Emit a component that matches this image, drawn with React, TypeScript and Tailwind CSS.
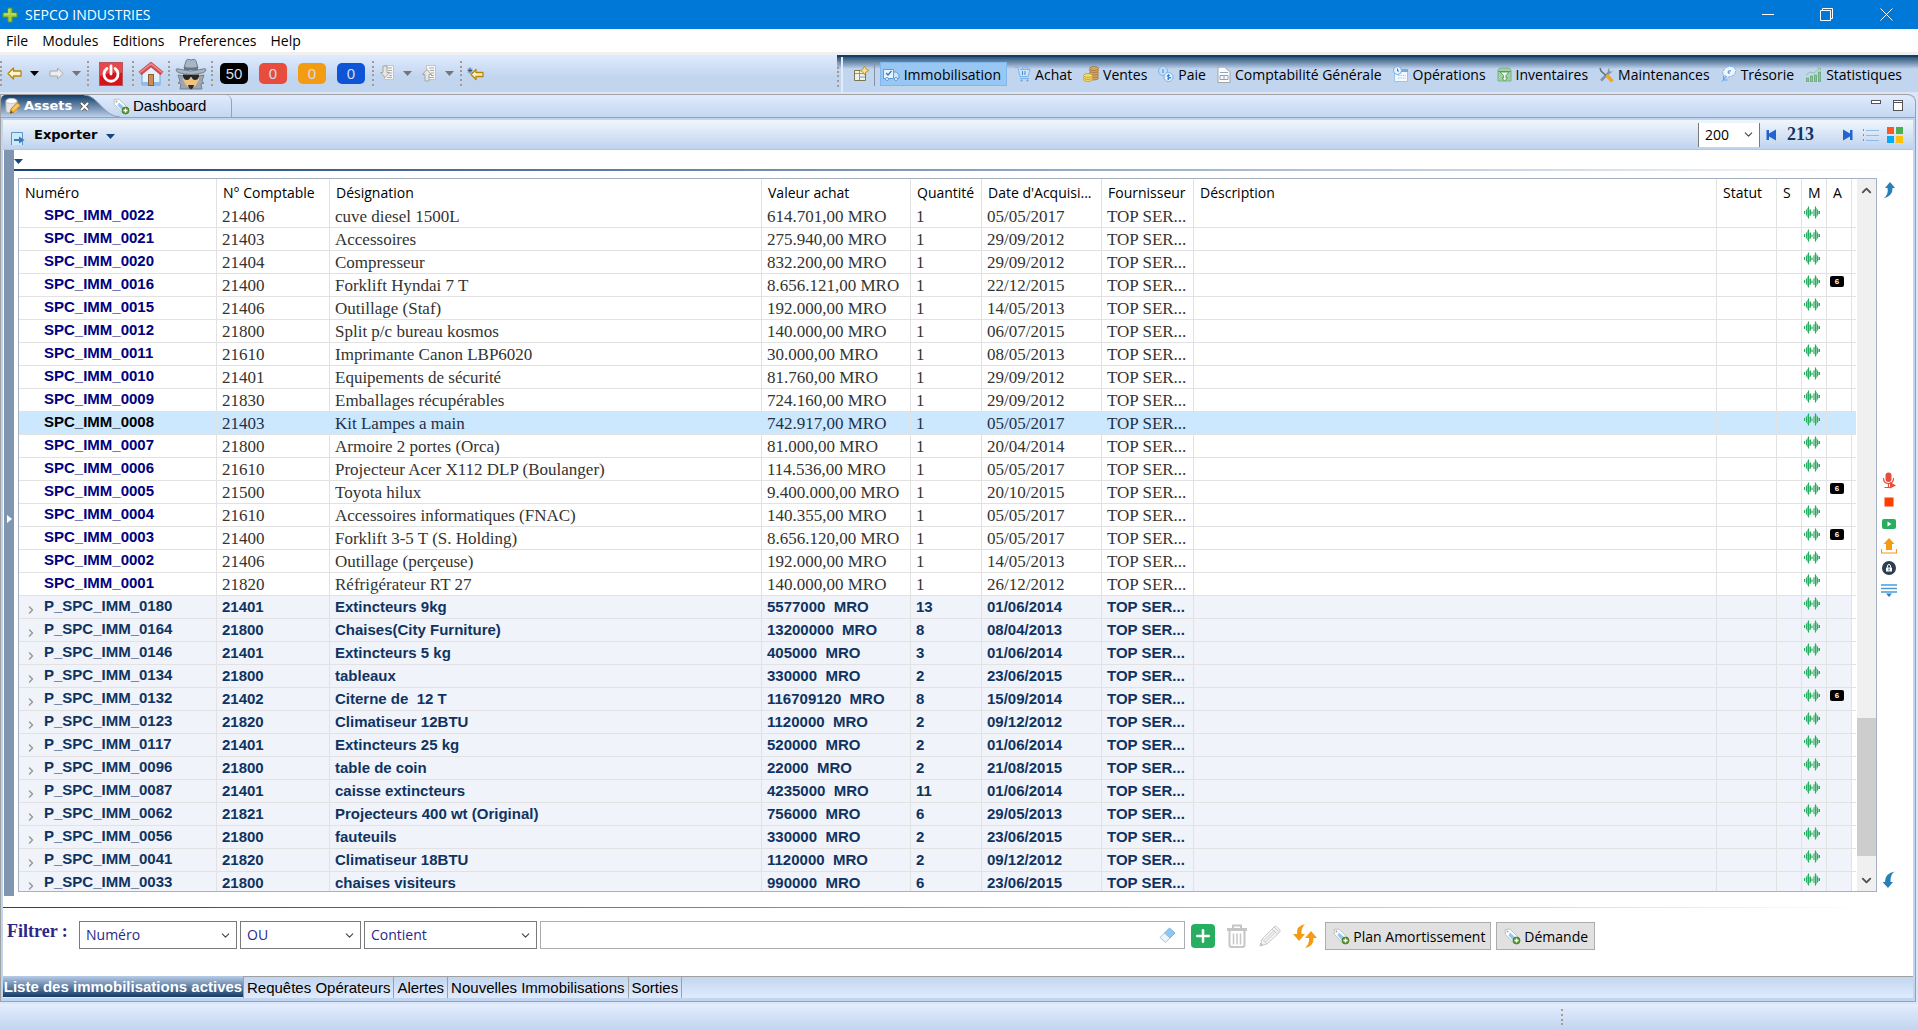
import React from "react";
import { ChevronDown, ChevronRight, ChevronUp, Plus } from "lucide-react";

interface Asset {
  id: string;
  account: string;
  label: string;
  value: string;
  qty: string;
  date: string;
  alerts?: number;
  group?: boolean;
  selected?: boolean;
}

const single = (
  id: string,
  account: string,
  label: string,
  value: string,
  date: string,
  extra: Partial<Asset> = {}
): Asset => ({
  id: `SPC_IMM_${id}`,
  account,
  label,
  value: `${value} MRO`,
  qty: "1",
  date,
  ...extra,
});

const group = (
  id: string,
  account: string,
  label: string,
  value: string,
  qty: string,
  date: string,
  extra: Partial<Asset> = {}
): Asset => ({
  id: `P_SPC_IMM_${id}`,
  account,
  label,
  value: `${value}  MRO`,
  qty,
  date,
  group: true,
  ...extra,
});

const assets: Asset[] = [
  single("0022", "21406", "cuve diesel 1500L", "614.701,00", "05/05/2017"),
  single("0021", "21403", "Accessoires", "275.940,00", "29/09/2012"),
  single("0020", "21404", "Compresseur", "832.200,00", "29/09/2012"),
  single("0016", "21400", "Forklift Hyndai 7 T", "8.656.121,00", "22/12/2015", { alerts: 6 }),
  single("0015", "21406", "Outillage (Staf)", "192.000,00", "14/05/2013"),
  single("0012", "21800", "Split p/c bureau kosmos", "140.000,00", "06/07/2015"),
  single("0011", "21610", "Imprimante Canon LBP6020", "30.000,00", "08/05/2013"),
  single("0010", "21401", "Equipements de sécurité", "81.760,00", "29/09/2012"),
  single("0009", "21830", "Emballages récupérables", "724.160,00", "29/09/2012"),
  single("0008", "21403", "Kit Lampes a main", "742.917,00", "05/05/2017", { selected: true }),
  single("0007", "21800", "Armoire 2 portes (Orca)", "81.000,00", "20/04/2014"),
  single("0006", "21610", "Projecteur Acer X112 DLP (Boulanger)", "114.536,00", "05/05/2017"),
  single("0005", "21500", "Toyota hilux", "9.400.000,00", "20/10/2015", { alerts: 6 }),
  single("0004", "21610", "Accessoires informatiques (FNAC)", "140.355,00", "05/05/2017"),
  single("0003", "21400", "Forklift 3-5 T (S. Holding)", "8.656.120,00", "05/05/2017", { alerts: 6 }),
  single("0002", "21406", "Outillage (perçeuse)", "192.000,00", "14/05/2013"),
  single("0001", "21820", "Réfrigérateur RT 27", "140.000,00", "26/12/2012"),
  group("0180", "21401", "Extincteurs 9kg", "5577000", "13", "01/06/2014"),
  group("0164", "21800", "Chaises(City Furniture)", "13200000", "8", "08/04/2013"),
  group("0146", "21401", "Extincteurs 5 kg", "405000", "3", "01/06/2014"),
  group("0134", "21800", "tableaux", "330000", "2", "23/06/2015"),
  group("0132", "21402", "Citerne de  12 T", "116709120", "8", "15/09/2014", { alerts: 6 }),
  group("0123", "21820", "Climatiseur 12BTU", "1120000", "2", "09/12/2012"),
  group("0117", "21401", "Extincteurs 25 kg", "520000", "2", "01/06/2014"),
  group("0096", "21800", "table de coin", "22000", "2", "21/08/2015"),
  group("0087", "21401", "caisse extincteurs", "4235000", "11", "01/06/2014"),
  group("0062", "21821", "Projecteurs 400 wt (Original)", "756000", "6", "29/05/2013"),
  group("0056", "21800", "fauteuils", "330000", "2", "23/06/2015"),
  group("0041", "21820", "Climatiseur 18BTU", "1120000", "2", "09/12/2012"),
  group("0033", "21800", "chaises visiteurs", "990000", "6", "23/06/2015"),
];

const columns = [
  { title: "Numéro", width: "w-[198px]" },
  { title: "N° Comptable", width: "w-[113px]" },
  { title: "Désignation", width: "w-[432px]" },
  { title: "Valeur achat", width: "w-[149px]" },
  { title: "Quantité", width: "w-[71px]" },
  { title: "Date d'Acquisi...", width: "w-[120px]" },
  { title: "Fournisseur", width: "w-[92px]" },
  { title: "Déscription", width: "" },
  { title: "Statut", width: "w-[60px]" },
  { title: "S", width: "w-[25px]" },
  { title: "M", width: "w-[25px]" },
  { title: "A", width: "w-[25px]" },
];

/* ---------- icons ---------- */

const AppIcon = () => (
  <svg width="16" height="16" viewBox="0 0 16 16">
    <path d="M6 1h4v5h5v4h-5v5H6v-5H1V6h5z" fill="#a8cf38" stroke="#5f9a2a" />
    <path d="M7 2v5H2M9 7h5" stroke="#d6ec7a" fill="none" />
  </svg>
);

const Caret = ({ color = "#000" }: { color?: string }) => (
  <svg width="9" height="5" viewBox="0 0 9 5">
    <path d="M0 0h9L4.500 5z" fill={color} />
  </svg>
);

const Handle = () => (
  <svg width="2" height="27" viewBox="0 0 2 27">
    {[1, 6, 10, 14, 19, 24].map((y) => (
      <rect key={y} y={y} width="2" height="2" fill="#a39c8c" />
    ))}
  </svg>
);

const ArrowLeftIcon = () => (
  <svg width="15" height="13" viewBox="0 0 15 13">
    <path d="M1 6.500L6.500 1v3H14v5H6.500v3z" fill="#fff6cf" stroke="#b8860b" strokeWidth="1.300" strokeLinejoin="round" />
  </svg>
);

const ArrowRightIcon = () => (
  <svg width="15" height="13" viewBox="0 0 15 13">
    <path d="M14 6.500L8.500 1v3H1v5h7.500v3z" fill="#ededed" stroke="#a9a9a9" strokeLinejoin="round" />
  </svg>
);

const PowerIcon = () => (
  <svg width="24" height="24" viewBox="0 0 24 24">
    <rect x="0.500" y="0.500" width="23" height="23" fill="#d3141b" stroke="#b5575c" />
    <path d="M1 1h22v10Q12 9 1 14z" fill="#e6484c" />
    <path d="M8 6.500a7 7 0 1 0 8 0" fill="none" stroke="#fff" strokeWidth="2.800" strokeLinecap="round" />
    <path d="M12 4v8" stroke="#fff" strokeWidth="2.800" strokeLinecap="round" />
  </svg>
);

const HouseIcon = () => (
  <svg width="26" height="24" viewBox="0 0 26 24">
    <path d="M4 11l9-8 9 8v12H4z" fill="#e4f1fd" stroke="#6da5dc" />
    <path d="M4 20h18v3H4z" fill="#8dbcec" />
    <rect x="10.500" y="12.500" width="5" height="11" fill="#c98e5c" stroke="#8f5e35" />
    <path d="M2 11.500L13 2.500l11 9" fill="none" stroke="#cf4c51" strokeWidth="4.500" />
    <path d="M2 10.500L13 2l11 8.500" fill="none" stroke="#ee8e8f" strokeWidth="1.500" />
  </svg>
);

const SpyIcon = () => (
  <svg width="32" height="32" viewBox="0 0 32 32">
    <path d="M3 17l6 1h14l6-1-2 6 2 2-3 1 1 5H5l1-5-3-1 2-2z" fill="#9aa6b3" stroke="#75818e" />
    <path d="M8 14h16v8l-3 5-5 4-5-4-3-5z" fill="#efc27e" />
    <path d="M13 27h6l-1 3-2 1.500-2-1.500z" fill="#2f2f33" />
    <path d="M8 16.500h16v2q-1 3.500-4 3.500-2.500 0-3.500-3h-1Q14.500 22 12 22q-3 0-4-3.500z" fill="#24272c" />
    <path d="M9 10l2-7q1-2.500 3-1.500l2 .5 2-.5q2-1 3 1.500l2 7z" fill="#a9b5c2" stroke="#71808e" />
    <path d="M9 8.500q7 3 14 0v3.500H9z" fill="#66768a" />
    <path d="M1 12q0-2 3-1l5 1q7 2 14 0l5-1q3-1 3 1 0 3.500-15 4.500Q1 15.500 1 12z" fill="#a9b5c2" stroke="#71808e" />
  </svg>
);

const PageArrowIcon = ({ up }: { up?: boolean }) => (
  <svg width="15" height="17" viewBox="0 0 15 17">
    <path d="M4.500 .5h9v14h-9z" fill="#f6f6f4" stroke="#c4c4c0" />
    <path d="M7 3h5M8 5.500h4M9 8h3M9 10.500h3M7 12.500h5" stroke="#a9a9a6" />
    {up ? (
      <path d="M5 4.500L9.500 9.500H7V16H3V9.500H.5z" fill="#e6e6e2" stroke="#a5a5a0" />
    ) : (
      <path d="M5 12.500L9.500 7.500H7V1H3v6.500H.5z" fill="#e6e6e2" stroke="#a5a5a0" />
    )}
  </svg>
);

const LastEditIcon = () => (
  <svg width="17" height="14" viewBox="0 0 17 14">
    <path d="M4 7.500l5-5v3h7v4H9v3z" fill="#ffefb8" stroke="#b8860b" strokeWidth="1.300" strokeLinejoin="round" />
    <path d="M3 .5v6M.5 3.500h5M1 1.500l4 4M5 1.500l-4 4" stroke="#33567d" strokeWidth="0.900" />
  </svg>
);

const PerspectiveIcon = () => (
  <svg width="16" height="16" viewBox="0 0 16 16">
    <path d="M1.500 4.500h11v10h-11z" fill="#eef3e6" stroke="#7a7654" />
    <path d="M2 7.500h10M6.500 5v9M7 11h5" stroke="#7a9ac0" />
    <path d="M11.500 0l1.500 3 3 1.500-3 1.500-1.500 3L10 6 7 4.500 10 3z" fill="#fbe08a" stroke="#b08a2c" strokeWidth="0.800" />
  </svg>
);

const TruckIcon = () => (
  <svg width="17" height="16" viewBox="0 0 17 16">
    <path d="M.5 3.500h10v9H.5z" fill="#eaf4fe" stroke="#5b9bd8" />
    <path d="M10.500 6h3l2.500 3v3.500h-5.500z" fill="#cfe4f8" stroke="#5b9bd8" />
    <path d="M3 7l2 2 3.500-4" fill="none" stroke="#2f77c4" strokeWidth="1.300" />
    <circle cx="4" cy="13" r="1.500" fill="#fff" stroke="#5b9bd8" />
    <circle cx="13" cy="13" r="1.500" fill="#fff" stroke="#5b9bd8" />
  </svg>
);

const CartIcon = () => (
  <svg width="16" height="16" viewBox="0 0 16 16">
    <path d="M0 1.500h3l2 9h8l2-7H5" fill="#cfe4f9" stroke="#7db2e5" />
    <path d="M7.500 5v4M10 5v4" stroke="#3f86d0" />
    <path d="M7 3q1-3 4-2t2 2" fill="none" stroke="#7db2e5" />
    <path d="M5 12.500h9" stroke="#7db2e5" />
    <circle cx="6.500" cy="14.500" r="1" fill="#5f9fdc" />
    <circle cx="12.500" cy="14.500" r="1" fill="#5f9fdc" />
  </svg>
);

const CoinsIcon = () => (
  <svg width="16" height="16" viewBox="0 0 16 16">
    {[12, 9.500, 7, 4.500, 2.500].map((y) => (
      <ellipse key={y} cx="11" cy={y} rx="4.500" ry="2" fill="#d4a565" stroke="#9c6f38" strokeWidth="0.700" />
    ))}
    {[13.500, 11.500, 9.500].map((y) => (
      <ellipse key={y} cx="5" cy={y} rx="4.500" ry="2" fill="#f4da6c" stroke="#b9952d" strokeWidth="0.700" />
    ))}
  </svg>
);

const PayIcon = () => (
  <svg width="16" height="16" viewBox="0 0 16 16">
    <circle cx="5" cy="5" r="4.500" fill="#c5def8" stroke="#7db2e5" />
    <circle cx="10.500" cy="11" r="4.500" fill="#e6f2fe" stroke="#7db2e5" />
    <path d="M12 9.500q-3-1-3 .5t3 1.500-3 1.500M10.500 8v6M5 3v4" fill="none" stroke="#3f86d0" />
  </svg>
);

const LedgerIcon = () => (
  <svg width="14" height="17" viewBox="0 0 14 17">
    <path d="M1 .5l1.500 1.500L4 .5 5.500 2 7 .5l3 3 3 2v11H1z" fill="#fbfbfb" stroke="#a5a5a5" />
    <path d="M3 6.500h8M3 9.500h8v4H3zM7 9.500v4" fill="none" stroke="#8ba6c4" />
  </svg>
);

const ScheduleIcon = () => (
  <svg width="16" height="16" viewBox="0 0 16 16">
    <path d="M1.500 4.500h13v11h-13z" fill="#f4f9ff" stroke="#9cc3ea" />
    <path d="M8 3h7v3H8z" fill="#6fabe4" />
    <path d="M5 9.500h8M5 12h8" stroke="#a7c6e6" strokeDasharray="1.500 1" />
    <circle cx="4.500" cy="4.500" r="4" fill="#e8f3fe" stroke="#6fabe4" />
    <path d="M4.500 2.500v2.500H6" fill="none" stroke="#2f77c4" />
  </svg>
);

const InventoryIcon = () => (
  <svg width="15" height="15" viewBox="0 0 15 15">
    <path d="M1 3l2-2h9l2 2v11H1z" fill="#a3cfa7" stroke="#77b57e" />
    <path d="M1 4.500h13" stroke="#5fa568" />
    <path d="M3 5h9l-3 3.500v2.500h1.500L7.500 14 5 11h1.500V8.500z" fill="#e8f5e8" stroke="#3e8b4a" strokeWidth="0.700" />
  </svg>
);

const ToolsIcon = () => (
  <svg width="15" height="15" viewBox="0 0 15 15">
    <path d="M2 13.500L11 4.500" stroke="#7d93a8" strokeWidth="2.500" />
    <path d="M14 3.500L12 5l-2-1.500L10.500 1Q8 2 9 5.500 13 7 14 3.500z" fill="#7d93a8" />
    <path d="M1 1l1 3 5 4.500" fill="none" stroke="#5c6f80" strokeWidth="1.500" />
    <path d="M8.500 9l4 4.500" stroke="#f5a623" strokeWidth="3.500" strokeLinecap="round" />
  </svg>
);

const TreasuryIcon = () => (
  <svg width="16" height="16" viewBox="0 0 16 16">
    <path d="M5 1.500q5-2.500 9 1 2 4-2 7l-3 1-2 1-5-3Q1 5 5 1.500z" fill="#eef6fe" stroke="#7db2e5" strokeDasharray="3 1" />
    <path d="M10 5q-3-1-3 1t2 1" fill="none" stroke="#3f86d0" />
    <path d="M1 15.500l4-5M2.500 10v4h4" stroke="#5f9fdc" fill="none" />
  </svg>
);

const StatsIcon = () => (
  <svg width="17" height="15" viewBox="0 0 17 15">
    <path d="M1.500 11h2v4h-2zM5.500 9h2v6h-2zM9.500 8h2v7h-2zM13.500 5h2v10h-2z" fill="#8cc79a" stroke="#5fa874" strokeWidth="0.800" />
    <path d="M1 8l4-3 4 1 6-5M12 1h3.500v3" fill="none" stroke="#8fc49c" />
  </svg>
);

const TagIcon = () => (
  <svg width="17" height="17" viewBox="0 0 17 17">
    <path d="M1 1.500L6 1l8.500 8.500L9.500 15 1.500 6.500z" fill="#fcfcfc" stroke="#b5b5b5" strokeWidth="0.800" />
    <path d="M6 4.500l6 5.500-2.500 3L4.500 7.500z" fill="#8fc9f6" />
    <circle cx="3.500" cy="3.500" r="1" fill="#aaa" />
    <circle cx="12.500" cy="12.500" r="3.500" fill="#5c9d34" stroke="#3e7420" strokeWidth="0.800" />
    <path d="M12.500 10.500v4M10.500 12.500h4" stroke="#fff" strokeWidth="1.300" />
  </svg>
);

const AssetIcon = () => (
  <svg width="16" height="17" viewBox="0 0 16 17">
    <path d="M1 3v9q0 3 5.500 3T12 12V3z" fill="#e4e4e4" stroke="#bdbdbd" />
    <ellipse cx="6.500" cy="3" rx="5.500" ry="2.500" fill="#fff" stroke="#c9c9c9" />
    <path d="M5 15.500l1-4.500 6-6.500 3.500 3L9.500 14z" fill="#f5b93f" stroke="#b77a1c" strokeWidth="0.800" />
    <path d="M8 11.500l5-5" stroke="#fde39b" />
    <path d="M5 15.500l1-3 2 2z" fill="#6b4a1e" />
  </svg>
);

const ExportIcon = () => (
  <svg width="14" height="13" viewBox="0 0 14 13">
    <path d="M.5 13V.5h11V13" fill="#cdeafc" stroke="#5b96cd" />
    <path d="M3 7h5V4.500L13.500 8 8 11.500V9H3z" fill="#3b78b5" />
  </svg>
);

const StepIcon = ({ flip }: { flip?: boolean }) => (
  <svg width="11" height="12" viewBox="0 0 11 12" className={flip ? "rotate-180" : ""}>
    <path d="M.5 1h2.500v3.500L10 .5v11L3 7.500V11H.5z" fill="#2264cf" />
  </svg>
);

const ListIcon = () => (
  <svg width="16" height="14" viewBox="0 0 16 14">
    <path d="M3 2.500h13M3 7.500h13M3 12.500h13" stroke="#8fbce6" />
    <path d="M.5 1v2M.5 6v2M.5 11v2" stroke="#5d97cf" />
  </svg>
);

const TilesIcon = () => (
  <svg width="16" height="16" viewBox="0 0 16 16">
    <rect width="7" height="7" fill="#ff5722" />
    <rect x="9" width="7" height="7" fill="#4caf50" />
    <rect y="9" width="7" height="7" fill="#03a9f4" />
    <rect x="9" y="9" width="7" height="7" fill="#ffc107" />
  </svg>
);

const WaveIcon = () => (
  <svg width="16" height="13" viewBox="0 0 16 13">
    <path
      d="M.5 5v3M2.500 3.500v6M4.500 .5v12M6.500 3.500v6M11.500 .5v12M13.500 3.500v6M15.500 5v3"
      stroke="#27ae60"
      strokeWidth="1.200"
    />
    <path d="M3.500 2v9M5.500 4v6M7.500 5.500v2.500M8.500 5.500v2.500M9.500 3.500v6.500M10.500 3v7M12.500 2v9M14.500 5v3" stroke="#7fcb9f" />
  </svg>
);

const CurveUpIcon = () => (
  <svg width="14" height="17" viewBox="0 0 14 17">
    <path d="M8 0l5 6h-2.500Q11 14 1 16.500 7 13 5.500 6H3z" fill="#2980b9" />
  </svg>
);

const CurveDownIcon = () => (
  <svg width="14" height="17" viewBox="0 0 14 17">
    <path d="M6 17L.5 11H3Q3 2 13 .5 8 3 8.500 11H11z" fill="#2980b9" />
  </svg>
);

const MicIcon = () => (
  <svg width="14" height="17" viewBox="0 0 14 17">
    <rect x="3.500" y="0.500" width="6" height="9.500" rx="3" fill="#e74c3c" />
    <path d="M1.500 6q0 5.500 5 5.500T11.500 6M6.500 11v4M2.500 15.500H8" fill="none" stroke="#e74c3c" strokeWidth="1.200" />
    <path d="M8 10l6 3.500L8 16.500z" fill="#e74c3c" />
  </svg>
);

const StopIcon = () => (
  <svg width="14" height="12" viewBox="0 0 14 12">
    <rect x="2.500" y="1.500" width="9" height="9" fill="#ff3d00" />
  </svg>
);

const PlayIcon = () => (
  <svg width="14" height="12" viewBox="0 0 14 12">
    <rect y="1" width="14" height="10" rx="2" fill="#27ae60" />
    <path d="M5.500 3.500l4 2.500-4 2.500z" fill="#fff" />
  </svg>
);

const UploadIcon = () => (
  <svg width="16" height="16" viewBox="0 0 16 16">
    <path d="M8 0l5.500 6H11v6H5V6H2.500z" fill="#f39c12" />
    <path d="M.5 11v4h15v-4" fill="none" stroke="#f39c12" strokeWidth="1.200" />
  </svg>
);

const LockIcon = () => (
  <svg width="14" height="14" viewBox="0 0 14 14">
    <circle cx="7" cy="7" r="7" fill="#2c3e50" />
    <rect x="4" y="6.500" width="6" height="4" fill="#fff" />
    <path d="M5.500 6.500V5q0-1.500 1.500-1.500T8.500 5v1.500" fill="none" stroke="#fff" />
    <path d="M7 7.500v2" stroke="#2c3e50" />
  </svg>
);

const LinesIcon = () => (
  <svg width="16" height="13" viewBox="0 0 16 13">
    <path d="M0 1h16M0 4.500h16M0 8h16" stroke="#4c9ad1" strokeWidth="1.500" />
    <path d="M5 9.500h6L8 13z" fill="#2980b9" />
  </svg>
);

const EraserIcon = () => (
  <svg width="17" height="16" viewBox="0 0 17 16">
    <path d="M10.500 1L16 6l-5 5-5.500-5z" fill="#8fc6f5" stroke="#6ba3d6" strokeWidth="0.800" />
    <path d="M5.500 6L11 11l-4.500 4.500L1 10.500z" fill="#eaf5fd" stroke="#8db4d6" strokeWidth="0.800" />
  </svg>
);

const TrashIcon = () => (
  <svg width="20" height="24" viewBox="0 0 20 24" fill="none" stroke="#c6c6c6">
    <path d="M0 5.500h20" strokeWidth="3" />
    <path d="M6 4V1.500h8V4" strokeWidth="2" />
    <path d="M2.500 7v14q0 2 2 2h11q2 0 2-2V7" strokeWidth="2" />
    <path d="M6.500 9.500v11M10 9.500v11M13.500 9.500v11" strokeWidth="1.500" />
  </svg>
);

const PencilIcon = () => (
  <svg width="22" height="22" viewBox="0 0 22 22" fill="#f3f3f3" stroke="#cbcbcb">
    <path d="M1 21l2-7L15 2q1-1.500 2.500-.5l3.500 3.500q.5 1.500-.5 2.500L8 19z" />
    <path d="M3 14l5 5M13 4l5 5M15 2l5 5M5 15.500L15.500 5M6.500 17L17 6.500" fill="none" />
    <path d="M1 21l1-3 2 2z" fill="#bdbdbd" />
  </svg>
);

const SwapIcon = () => (
  <svg width="24" height="24" viewBox="0 0 24 24">
    <path d="M12 0Q3 2 4 10H0l6 7 6-7H8.500Q8 4 12 0z" fill="#f39c12" />
    <path d="M12 24q9-2 8.500-10H24l-6-7-6 7h4q.5 6-4 10z" fill="#f39c12" />
  </svg>
);

const perspectives = [
  { name: "Immobilisation", icon: <TruckIcon />, active: true },
  { name: "Achat", icon: <CartIcon /> },
  { name: "Ventes", icon: <CoinsIcon /> },
  { name: "Paie", icon: <PayIcon /> },
  { name: "Comptabilité Générale", icon: <LedgerIcon /> },
  { name: "Opérations", icon: <ScheduleIcon /> },
  { name: "Inventaires", icon: <InventoryIcon /> },
  { name: "Maintenances", icon: <ToolsIcon /> },
  { name: "Trésorie", icon: <TreasuryIcon /> },
  { name: "Statistiques", icon: <StatsIcon /> },
];

const counters = [
  { value: 50, color: "bg-black" },
  { value: 0, color: "bg-[#e74c3c]" },
  { value: 0, color: "bg-[#f39c12]" },
  { value: 0, color: "bg-[#0d55d6]" },
];

const sideTools = [
  { label: "Enregistrer", icon: <MicIcon /> },
  { label: "Stop", icon: <StopIcon /> },
  { label: "Lire", icon: <PlayIcon /> },
  { label: "Envoyer", icon: <UploadIcon /> },
  { label: "Verrouiller", icon: <LockIcon /> },
  { label: "Lignes", icon: <LinesIcon /> },
];

const bottomTabs = ["Requêtes Opérateurs", "Alertes", "Nouvelles Immobilisations", "Sorties"];

/* ---------- window parts ---------- */

const TitleBar = () => (
  <header className="flex h-[29px] shrink-0 items-center bg-[#0078d7] pl-[2px] text-white">
    <AppIcon />
    <h1 className="ml-[7px] flex-1 text-[14px]">SEPCO INDUSTRIES</h1>
    <button aria-label="Réduire" className="flex w-[58px] justify-center">
      <svg width="12" height="12" viewBox="0 0 12 12" stroke="#fff">
        <path d="M0 5.500h12" />
      </svg>
    </button>
    <button aria-label="Restaurer" className="flex w-[58px] justify-center">
      <svg width="13" height="13" viewBox="0 0 13 13" stroke="#fff" fill="none">
        <path d="M.5 2.500h10v10H.5zM2.500 2.500v-2h10v10h-2" />
      </svg>
    </button>
    <button aria-label="Fermer" className="flex w-[63px] justify-center">
      <svg width="13" height="13" viewBox="0 0 13 13" stroke="#fff">
        <path d="M.5 .5l12 12M12.500 .5l-12 12" />
      </svg>
    </button>
  </header>
);

const MenuBar = () => (
  <nav className="flex h-[26px] shrink-0 items-center gap-[14px] border-b-[3px] border-[#f0f0f0] bg-white pl-[6px] text-[14px]">
    {["File", "Modules", "Editions", "Preferences", "Help"].map((item) => (
      <button key={item}>{item}</button>
    ))}
  </nav>
);

const Toolbar = () => (
  <div className="flex h-[39px] shrink-0 border-b-2 border-[#dbe6fb] bg-linear-to-b from-[#e0ebfd] to-[#c1d5ef] to-60%">
    <div className="flex flex-1 items-center">
      <Handle />
      <button aria-label="Précédent" className="ml-[5px]"><ArrowLeftIcon /></button>
      <button aria-label="Historique précédent" className="ml-2"><Caret /></button>
      <button aria-label="Suivant" className="ml-[10px]"><ArrowRightIcon /></button>
      <button aria-label="Historique suivant" className="mr-[6px] ml-2"><Caret color="#757575" /></button>
      <Handle />
      <button aria-label="Quitter" className="mr-[9px] ml-[10px]"><PowerIcon /></button>
      <Handle />
      <button aria-label="Accueil" className="mr-1 ml-1"><HouseIcon /></button>
      <Handle />
      <button aria-label="Audit" className="mr-1 ml-[5px]"><SpyIcon /></button>
      <Handle />
      <div className="mr-[7px] ml-[7px] flex gap-[11px]">
        {counters.map((counter, index) => (
          <button
            key={index}
            className={`h-[21px] w-7 rounded-[5px] text-center font-['Liberation_Sans'] text-[15px] leading-[21px] text-[#d5dde8] ${counter.color}`}
          >
            {counter.value}
          </button>
        ))}
      </div>
      <Handle />
      <button aria-label="Annotation suivante" className="ml-[6px]"><PageArrowIcon /></button>
      <button aria-label="Options suivantes" className="ml-2"><Caret color="#757575" /></button>
      <button aria-label="Annotation précédente" className="ml-[10px]"><PageArrowIcon up /></button>
      <button aria-label="Options précédentes" className="mr-[6px] ml-2"><Caret color="#757575" /></button>
      <Handle />
      <button aria-label="Dernière modification" className="ml-[5px]"><LastEditIcon /></button>
    </div>
    <div className="flex border-t-2 border-[#133d62] bg-linear-to-b from-[#2d5377] to-[#c1d5ef] to-[12px]">
      <div className="w-[4px] pt-1">
        <Handle />
      </div>
      <div className="w-[2px] bg-[#e0ebfd]" />
      <nav className="flex items-start pt-[5px] pr-[13px] pl-[10px] text-[14px]">
        <button aria-label="Ouvrir une perspective" className="mr-[5px] flex h-6 items-center"><PerspectiveIcon /></button>
        <div className="mr-[5px] h-6 border-l border-[#8494a8]" />
        <div className="flex gap-[5px]">
          {perspectives.map((p) => (
            <button
              key={p.name}
              className={`flex h-6 items-center gap-1 border px-[2px] whitespace-nowrap ${
                p.active ? "border-[#7db8ef] bg-[#99c7f3] pr-[5px]" : "border-transparent"
              }`}
            >
              {p.icon}
              {p.name}
            </button>
          ))}
        </div>
      </nav>
    </div>
  </div>
);

const EditorTabs = () => (
  <div className="flex h-[24px] shrink-0 items-stretch rounded-tr-lg border-y border-[#a0a0a0] bg-linear-to-b from-[#e0ebfd] to-[#c4d7f1]">
    <button className="relative flex w-[112px] items-center pl-1 font-['DejaVu_Sans'] text-[13px] font-bold text-white">
      <svg className="absolute top-0 left-0" width="120" height="22" viewBox="0 0 120 22">
        <defs>
          <linearGradient id="activeTab" x1="0" y1="0" x2="0" y2="1">
            <stop offset="0" stopColor="#133d66" />
            <stop offset="1" stopColor="#bcd0ea" />
          </linearGradient>
        </defs>
        <path d="M0 22V5Q0 0 5 0h78c14 0 20 22 36 22z" fill="url(#activeTab)" />
        <path d="M83 0c14 0 20 22 36 22" fill="none" stroke="#8f9aa8" />
      </svg>
      <span className="relative flex items-center">
        <AssetIcon />
        <span className="ml-[3px]">Assets</span>
        <svg className="ml-2" width="9" height="9" viewBox="0 0 9 9">
          <path d="M1 1l7 7M8 1L1 8" stroke="#555" strokeWidth="3.500" />
          <path d="M1 1l7 7M8 1L1 8" stroke="#fff" strokeWidth="2" />
        </svg>
      </span>
    </button>
    <button className="relative flex w-[119px] items-center gap-[3px] rounded-tr-md border-r border-[#a0a0a0] font-['Liberation_Sans'] text-[15px]">
      <TagIcon />
      Dashboard
    </button>
    <div className="flex flex-1 justify-end gap-3 pt-[5px] pr-3">
      <button aria-label="Minimiser" className="h-1 w-[10px] border border-[#555] bg-white" />
      <button aria-label="Maximiser" className="h-[11px] w-[10px] border border-t-[3px] border-double border-[#555] bg-white" />
    </div>
  </div>
);

const ExportBar = () => (
  <div className="flex h-[30px] shrink-0 items-center border-b border-[#b5c7de] bg-linear-to-b from-[#f1f6fd] to-[#bfd3ee] pl-2">
    <button className="flex items-center font-['DejaVu_Sans'] text-[13px] font-bold">
      <span className="mt-2"><ExportIcon /></span>
      <span className="mr-[9px] ml-[9px]">Exporter</span>
      <span className="mt-1"><Caret color="#17457a" /></span>
    </button>
    <div className="flex-1" />
    <div className="grid h-6 w-[62px] items-center border-x border-[#7a7a7a] bg-white">
      <select aria-label="Lignes par page" className="col-start-1 row-start-1 h-6 appearance-none bg-transparent pl-[6px] text-[14px]">
        <option>200</option>
      </select>
      <ChevronDown className="pointer-events-none col-start-1 row-start-1 mr-1 justify-self-end" size={13} strokeWidth={2} color="#444" />
    </div>
    <button aria-label="Première page" className="ml-[6px]"><StepIcon /></button>
    <span className="ml-[10px] w-[55px] font-['Liberation_Serif'] text-[18px] font-bold text-[#12355f]">213</span>
    <button aria-label="Dernière page" className="mr-[10px]"><StepIcon flip /></button>
    <button aria-label="Liste" className="mr-2"><ListIcon /></button>
    <button aria-label="Mosaïque" className="mr-[10px]"><TilesIcon /></button>
  </div>
);

const AssetRow = ({ asset }: { asset: Asset }) => {
  const rowStyle = asset.group
    ? "bg-[#f0f4fa] font-['Liberation_Sans'] text-[15px] font-bold text-[#0f3361]"
    : `font-['Liberation_Serif'] text-[17px] ${asset.selected ? "bg-[#cce8ff] text-[#1f2f45]" : "text-[#333]"}`;
  const idColor = asset.group ? "text-[#0f3361]" : asset.selected ? "text-black" : "text-[#000080]";
  const cell = `h-[23px] overflow-hidden border-r border-b border-[#e2e2e2] p-0 pl-[5px] align-top whitespace-pre ${
    asset.group ? "leading-[22px]" : "pt-[2px] leading-5"
  }`;

  return (
    <tr className={rowStyle}>
      <td className={`h-[23px] border-r border-b border-[#e2e2e2] p-0 align-top font-['Liberation_Sans'] text-[15px] leading-[19px] font-bold ${idColor}`}>
        <span className="flex">
          <span className="w-[25px] pt-2 pl-[6px]">
            {asset.group && <ChevronRight size={12} color="#999" strokeWidth={3} />}
          </span>
          {asset.id}
        </span>
      </td>
      <td className={cell}>{asset.account}</td>
      <td className={cell}>{asset.label}</td>
      <td className={cell}>{asset.value}</td>
      <td className={cell}>{asset.qty}</td>
      <td className={cell}>{asset.date}</td>
      <td className={cell}>TOP SER...</td>
      <td className={cell} />
      <td className={cell} />
      <td className={cell} />
      <td className="border-r border-b border-[#e2e2e2] p-0 pt-px pl-[2px] align-top">
        <WaveIcon />
      </td>
      <td className="border-r border-b border-[#e2e2e2] p-0 pt-[2px] pl-[3px] align-top">
        {asset.alerts && (
          <span className="block h-[11px] w-[14px] rounded-[2px] bg-black text-center font-['Liberation_Sans'] text-[8px] leading-[11px] font-bold text-white">
            {asset.alerts}
          </span>
        )}
      </td>
      <td className={`border-b border-[#e2e2e2] p-0 ${asset.selected ? "" : "bg-white"}`} />
    </tr>
  );
};

const AssetTable = () => (
  <div className="flex min-h-0 flex-1 overflow-hidden border border-[#a5b1c2] bg-white">
    <div className="min-w-0 flex-1 pr-px">
      <table className="w-full table-fixed border-separate border-spacing-0">
        <thead>
          <tr>
            {columns.map((column) => (
              <th
                key={column.title}
                className={`h-[26px] border-r border-[#e2e2e2] p-0 pt-px pl-[6px] text-left text-[14px] leading-5 font-normal whitespace-nowrap ${column.width}`}
              >
                {column.title}
              </th>
            ))}
            <td className="w-1 p-0" />
          </tr>
        </thead>
        <tbody>
          {assets.map((asset) => (
            <AssetRow key={asset.id} asset={asset} />
          ))}
        </tbody>
      </table>
    </div>
    <div className="flex w-[19px] flex-col bg-[#f0f0f0]">
      <button aria-label="Défiler vers le haut" className="flex h-[22px] items-center justify-center">
        <ChevronUp size={15} color="#505050" strokeWidth={3} />
      </button>
      <div className="flex-[517]" />
      <div className="flex-[138] bg-[#cdcdcd]" />
      <div className="flex-[13]" />
      <button aria-label="Défiler vers le bas" className="flex h-[22px] items-center justify-center">
        <ChevronDown size={15} color="#505050" strokeWidth={3} />
      </button>
    </div>
  </div>
);

const SideTools = () => (
  <div className="flex w-[36px] flex-col items-center justify-between py-[4px] pr-3">
    <button aria-label="Remonter"><CurveUpIcon /></button>
    <div className="flex flex-col">
      {sideTools.map((tool) => (
        <button key={tool.label} aria-label={tool.label} className="flex h-[22px] items-center justify-center">
          {tool.icon}
        </button>
      ))}
    </div>
    <button aria-label="Descendre"><CurveDownIcon /></button>
  </div>
);

const FilterSelect = ({ label, value, width }: { label: string; value: string; width: string }) => (
  <div className={`grid h-7 items-center border border-[#7a7a7a] bg-white ${width}`}>
    <select aria-label={label} className="col-start-1 row-start-1 appearance-none bg-transparent pl-[6px] text-[14px] leading-5 text-[#28288c]">
      <option>{value}</option>
    </select>
    <ChevronDown className="pointer-events-none col-start-1 row-start-1 mr-1 justify-self-end" size={13} strokeWidth={2} color="#444" />
  </div>
);

const FilterBar = () => (
  <div className="flex h-[68px] shrink-0 items-start pt-[13px] pl-1">
    <label htmlFor="filter" className="w-[72px] font-['Liberation_Serif'] text-[18px] leading-5 font-bold text-[#28288c]">
      Filtrer :
    </label>
    <div className="flex gap-[3px]">
      <FilterSelect label="Champ" value="Numéro" width="w-[158px]" />
      <FilterSelect label="Opérateur" value="OU" width="w-[121px]" />
      <FilterSelect label="Condition" value="Contient" width="w-[173px]" />
    </div>
    <div className="ml-[3px] flex h-7 flex-[2] items-center border border-[#abadb3] pr-2">
      <input id="filter" type="text" className="h-full min-w-0 flex-1 px-1 text-[14px] outline-none" />
      <button aria-label="Effacer"><EraserIcon /></button>
    </div>
    <div className="flex h-[30px] items-center gap-3 pl-[6px]">
      <button aria-label="Ajouter" className="flex h-6 w-6 items-center justify-center rounded-[4px] bg-[#27ae60] text-white">
        <Plus size={20} strokeWidth={3} />
      </button>
      <button aria-label="Supprimer"><TrashIcon /></button>
      <button aria-label="Modifier"><PencilIcon /></button>
      <button aria-label="Actualiser"><SwapIcon /></button>
    </div>
    <div className="ml-2 flex gap-[5px] pt-px text-[14px]">
      <button className="flex h-7 w-[166px] items-center gap-[3px] border border-[#adadad] bg-[#e1e1e1] pl-[7px] whitespace-nowrap">
        <TagIcon />
        Plan Amortissement
      </button>
      <button className="flex h-7 w-[99px] items-center gap-[3px] border border-[#adadad] bg-[#e1e1e1] pl-[7px] whitespace-nowrap">
        <TagIcon />
        Démande
      </button>
    </div>
    <div className="flex-1" />
  </div>
);

const BottomTabs = () => (
  <div className="flex h-[25px] shrink-0 border-b-[3px] border-[#c1d5ef] bg-linear-to-b from-[#c1d5ef] to-[#e0ebfd] font-['Liberation_Sans'] text-[15px]">
    <button className="h-[21px] w-[240px] bg-linear-to-b from-[#b9cde8] to-[#123b66] text-center leading-5 font-bold whitespace-nowrap text-white">
      Liste des immobilisations actives
    </button>
    <div className="flex flex-1 border-t border-l border-[#a0a0a0]">
      {bottomTabs.map((tab) => (
        <button key={tab} className="border-r border-[#a0a0a0] px-[3px] leading-[18px] whitespace-nowrap">
          {tab}
        </button>
      ))}
    </div>
  </div>
);

export default function App() {
  return (
    <div className="flex h-screen flex-col overflow-hidden bg-[#dbe6fb] font-['Open_Sans',sans-serif] text-black">
      <TitleBar />
      <MenuBar />
      <Toolbar />
      <main className="mr-[2px] flex min-h-0 flex-1 flex-col rounded-tr-lg border-x border-b border-[#a0a0a0]">
        <EditorTabs />
        <div className="flex min-h-0 flex-1 flex-col border-x-2 border-t-2 border-[#c1d5ef] bg-white">
          <ExportBar />
          <div className="flex min-h-0 flex-1">
            <div className="flex w-[11px] items-center justify-center border-l border-white bg-[#8096b0] pb-2">
              <svg width="5" height="8" viewBox="0 0 5 8">
                <path d="M0 0l5 4-5 4z" fill="#fff" />
              </svg>
            </div>
            <section className="flex min-w-0 flex-1 flex-col">
              <button aria-label="Déplier" className="flex h-[19px] shrink-0 items-center pt-1"><Caret color="#17457a" /></button>
              <div className="mr-3 h-[2px] shrink-0 bg-linear-to-r from-[#17457a] to-white" />
              <div className="mt-[7px] mb-1 flex min-h-0 flex-1 pl-1">
                <AssetTable />
                <SideTools />
              </div>
            </section>
          </div>
          <div className="mt-[11px] mr-10 h-px shrink-0 bg-linear-to-r from-[#17457a] to-white" />
          <FilterBar />
          <BottomTabs />
        </div>
      </main>
      <footer className="mt-[2px] flex h-[25px] shrink-0 items-center bg-linear-to-b from-[#e3edfd] to-[#c3d5f0]">
        <div className="flex-[1561]" />
        <svg width="2" height="18" viewBox="0 0 2 18">
          {[1, 6, 11, 15].map((y) => (
            <rect key={y} y={y} width="2" height="2" fill="#a39c8c" />
          ))}
        </svg>
        <div className="flex-[355]" />
      </footer>
    </div>
  );
}
